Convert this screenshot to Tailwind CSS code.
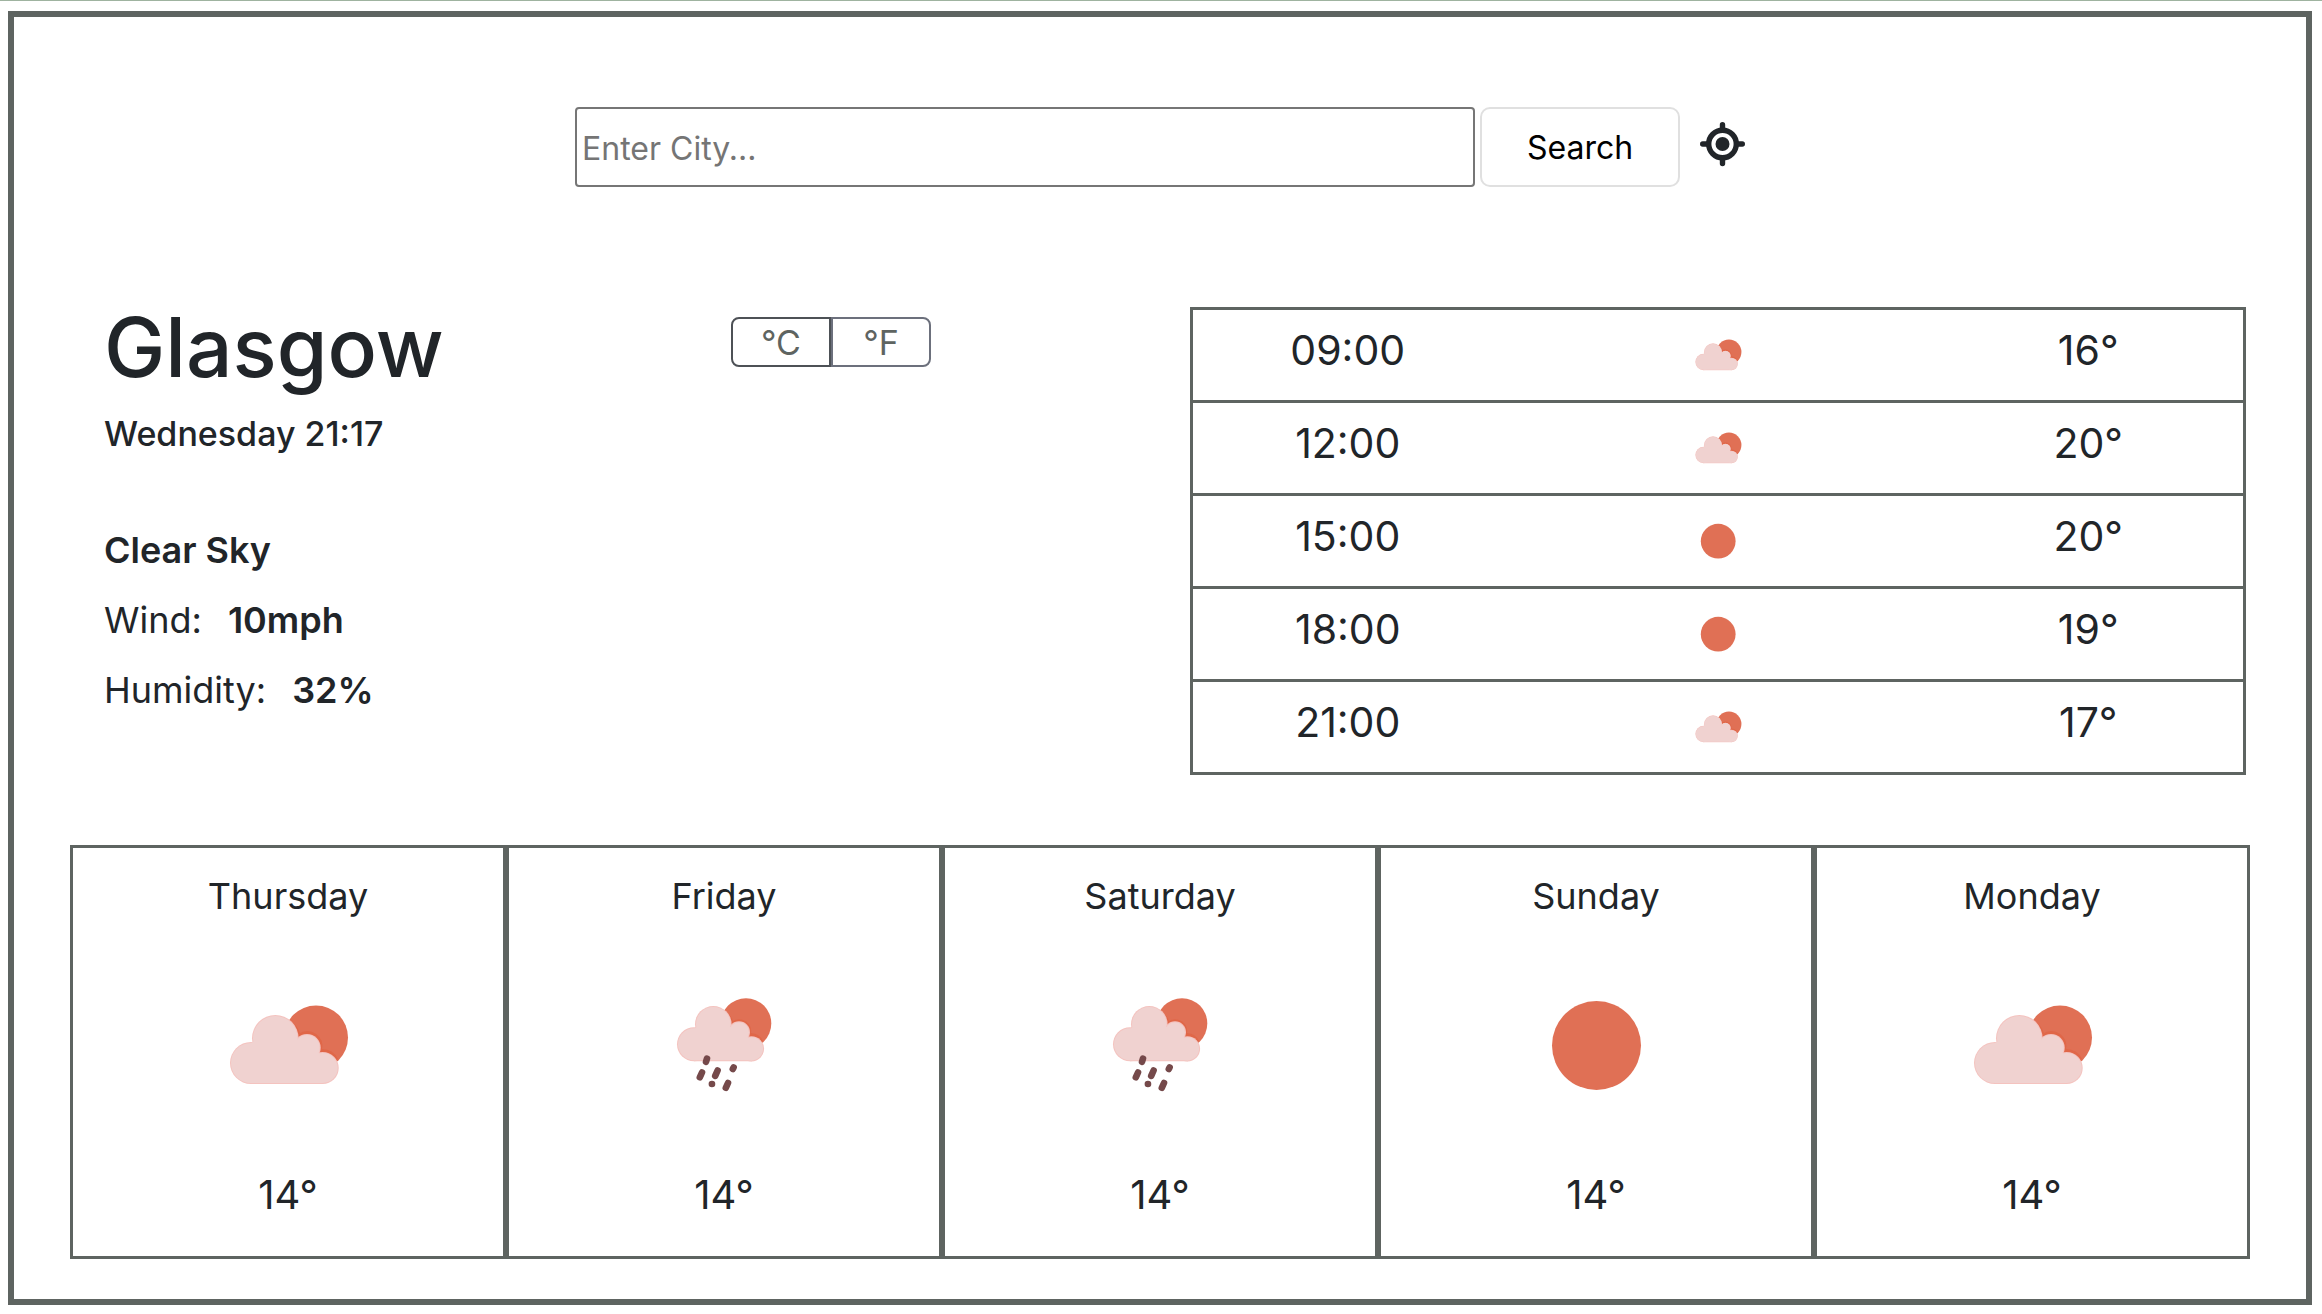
<!DOCTYPE html>
<html lang="en">
<head>
<meta charset="utf-8">
<meta name="viewport" content="width=device-width, initial-scale=1">
<title>Weather</title>
<script src="https://cdn.jsdelivr.net/npm/@tailwindcss/browser@4"></script>
</head>
<body class="border-t border-[#9fb3a0] bg-white font-['Inter',sans-serif] text-[#212529]">

<!-- Shared weather icons -->
<svg class="hidden" aria-hidden="true">
  <symbol id="cloudy" viewBox="0 0 128 128">
    <circle cx="92" cy="56.5" r="32" fill="#e07055"/>
    <g fill="#e0603f">
      <path d="M65 39a25 25 0 0 1 11 13a15 15 0 0 1 22 16a17 17 0 0 1 16 10l-10 8-50-20z" fill-opacity=".6"/>
    </g>
    <g fill="#f4c3bf">
      <circle cx="27" cy="82" r="21"/><circle cx="51.3" cy="57.3" r="23.3"/><circle cx="83" cy="66.7" r="13.7"/><circle cx="98.7" cy="87" r="16"/>
      <path d="M27 80h72v23H27z"/>
    </g>
    <g fill="#f0d2d0">
      <circle cx="27" cy="82" r="20"/><circle cx="51.3" cy="57.3" r="22.3"/><circle cx="83" cy="66.7" r="12.7"/><circle cx="98.7" cy="87" r="15"/>
      <path d="M27 62l4-2h56l9 14 3 28H27z"/>
    </g>
  </symbol>
  <symbol id="rain" viewBox="0 0 128 128">
    <circle cx="86" cy="42.5" r="25.3" fill="#e07055"/>
    <path d="M64 29a20 20 0 0 1 9 11a12 12 0 0 1 18 12a14 14 0 0 1 12 8l-9 6-40-15z" fill="#e0603f" fill-opacity=".6"/>
    <g fill="#f4c3bf">
      <circle cx="34" cy="63.3" r="17"/><circle cx="53.3" cy="43.3" r="18.3"/><circle cx="79" cy="51.3" r="11"/><circle cx="91.5" cy="67.8" r="12.6"/>
      <path d="M34 62h58v18.3H34z"/>
    </g>
    <g fill="#f0d2d0">
      <circle cx="34" cy="63.3" r="16"/><circle cx="53.3" cy="43.3" r="17.3"/><circle cx="79" cy="51.3" r="10"/><circle cx="91.5" cy="67.8" r="11.6"/>
      <path d="M34 48l3-2h44l8 12 3 21.3H34z"/>
    </g>
    <g stroke="#75494a" stroke-width="6.6" stroke-linecap="round">
      <path d="M47 77.6l-1 3.2M42 91.5l-2.2 4.8M57.6 89.5l-2.4 5.4M73.6 86.4l-.8 1.6M51.9 103h.1M68 102l-2.2 4.8"/>
    </g>
  </symbol>
  <symbol id="sunny" viewBox="0 0 128 128">
    <circle cx="64.5" cy="64.5" r="44.5" fill="#e07055"/>
  </symbol>
</svg>

<main class="mt-[10px] mr-[10px] mb-2 ml-2 border-6 border-[#5e6461] pt-[90px] pb-10">

  <form class="flex items-start justify-center" onsubmit="return false">
    <input type="text" aria-label="City" placeholder="Enter City..." class="mr-[5px] h-20 w-[900px] min-w-0 rounded-[4px] border-2 border-[#767676] px-[5px] pt-[2px] text-[32px] placeholder:text-[#757575]">
    <button type="submit" class="h-20 w-[200px] rounded-[10px] border-2 border-[#e0e0e0] pt-[2px] text-[32px] text-black">Search</button>
    <button type="button" aria-label="Use current location" class="mt-[15px] ml-5">
      <svg class="size-[45px]" viewBox="0 0 45 45" fill="none" stroke="#212529">
        <circle cx="22.5" cy="22" r="13.8" stroke-width="5.4"/>
        <circle cx="22.5" cy="22" r="7" fill="#212529" stroke="none"/>
        <path d="M22.5 2.7v5M22.5 36.5v5M2.7 22h5M37.3 22h5" stroke-width="5.4" stroke-linecap="round"/>
      </svg>
    </button>
  </form>

  <section class="mt-[120px] grid grid-cols-[1086fr_1056fr] pr-[60px] pl-[90px]">
    <div class="flex items-start justify-between pr-[259px]">
      <div>
        <h1 class="text-[82px] leading-[82px] font-medium">Glasgow</h1>
        <h2 class="mt-[21px] text-[34px] leading-[48px] font-medium">Wednesday 21:17</h2>
        <ul class="mt-[57px] text-[36px] leading-[70px]">
          <li class="font-semibold">Clear Sky</li>
          <li class="flex gap-[26px]">Wind: <strong class="font-semibold">10mph</strong></li>
          <li class="flex gap-[26px]">Humidity: <strong class="font-semibold">32%</strong></li>
        </ul>
      </div>
      <div class="mt-[10px] flex text-[34px] leading-[44px] text-[#5e6461]">
        <button type="button" class="w-[100px] rounded-l-[8px] border-2 border-[#4d5156] pt-[2px]">°C</button>
        <button type="button" class="w-[100px] rounded-r-[8px] border-2 border-[#6c707c] pt-[2px]">°F</button>
      </div>
    </div>

    <table class="w-full table-fixed border-collapse border-3 border-[#5e6461] text-center text-[41px] leading-[50px]">
      <tbody>
        <tr class="h-[93px] border-b-3 border-[#5e6461]"><td class="pr-10 pb-[11px]">09:00</td><td><svg class="mx-auto size-[50px]"><use href="#cloudy"/></svg></td><td class="pb-[11px] pl-10">16°</td></tr>
        <tr class="h-[93px] border-b-3 border-[#5e6461]"><td class="pr-10 pb-[11px]">12:00</td><td><svg class="mx-auto size-[50px]"><use href="#cloudy"/></svg></td><td class="pb-[11px] pl-10">20°</td></tr>
        <tr class="h-[93px] border-b-3 border-[#5e6461]"><td class="pr-10 pb-[11px]">15:00</td><td><svg class="mx-auto size-[50px]"><use href="#sunny"/></svg></td><td class="pb-[11px] pl-10">20°</td></tr>
        <tr class="h-[93px] border-b-3 border-[#5e6461]"><td class="pr-10 pb-[11px]">18:00</td><td><svg class="mx-auto size-[50px]"><use href="#sunny"/></svg></td><td class="pb-[11px] pl-10">19°</td></tr>
        <tr class="h-[93px]"><td class="pr-10 pb-[11px]">21:00</td><td><svg class="mx-auto size-[50px]"><use href="#cloudy"/></svg></td><td class="pb-[11px] pl-10">17°</td></tr>
      </tbody>
    </table>
  </section>

  <section class="mt-[70px] grid grid-cols-5 px-14 text-center">
    <article class="border-3 border-[#5e6461] pt-[21px] pb-[31px]">
      <h3 class="text-[36px] leading-[54px]">Thursday</h3>
      <svg class="mx-auto mt-[58px] size-32"><use href="#cloudy"/></svg>
      <p class="mt-14 text-[40px] leading-[60px]">14°</p>
    </article>
    <article class="border-3 border-[#5e6461] pt-[21px] pb-[31px]">
      <h3 class="text-[36px] leading-[54px]">Friday</h3>
      <svg class="mx-auto mt-[58px] size-32"><use href="#rain"/></svg>
      <p class="mt-14 text-[40px] leading-[60px]">14°</p>
    </article>
    <article class="border-3 border-[#5e6461] pt-[21px] pb-[31px]">
      <h3 class="text-[36px] leading-[54px]">Saturday</h3>
      <svg class="mx-auto mt-[58px] size-32"><use href="#rain"/></svg>
      <p class="mt-14 text-[40px] leading-[60px]">14°</p>
    </article>
    <article class="border-3 border-[#5e6461] pt-[21px] pb-[31px]">
      <h3 class="text-[36px] leading-[54px]">Sunday</h3>
      <svg class="mx-auto mt-[58px] size-32"><use href="#sunny"/></svg>
      <p class="mt-14 text-[40px] leading-[60px]">14°</p>
    </article>
    <article class="border-3 border-[#5e6461] pt-[21px] pb-[31px]">
      <h3 class="text-[36px] leading-[54px]">Monday</h3>
      <svg class="mx-auto mt-[58px] size-32"><use href="#cloudy"/></svg>
      <p class="mt-14 text-[40px] leading-[60px]">14°</p>
    </article>
  </section>
</main>
</body>
</html>
